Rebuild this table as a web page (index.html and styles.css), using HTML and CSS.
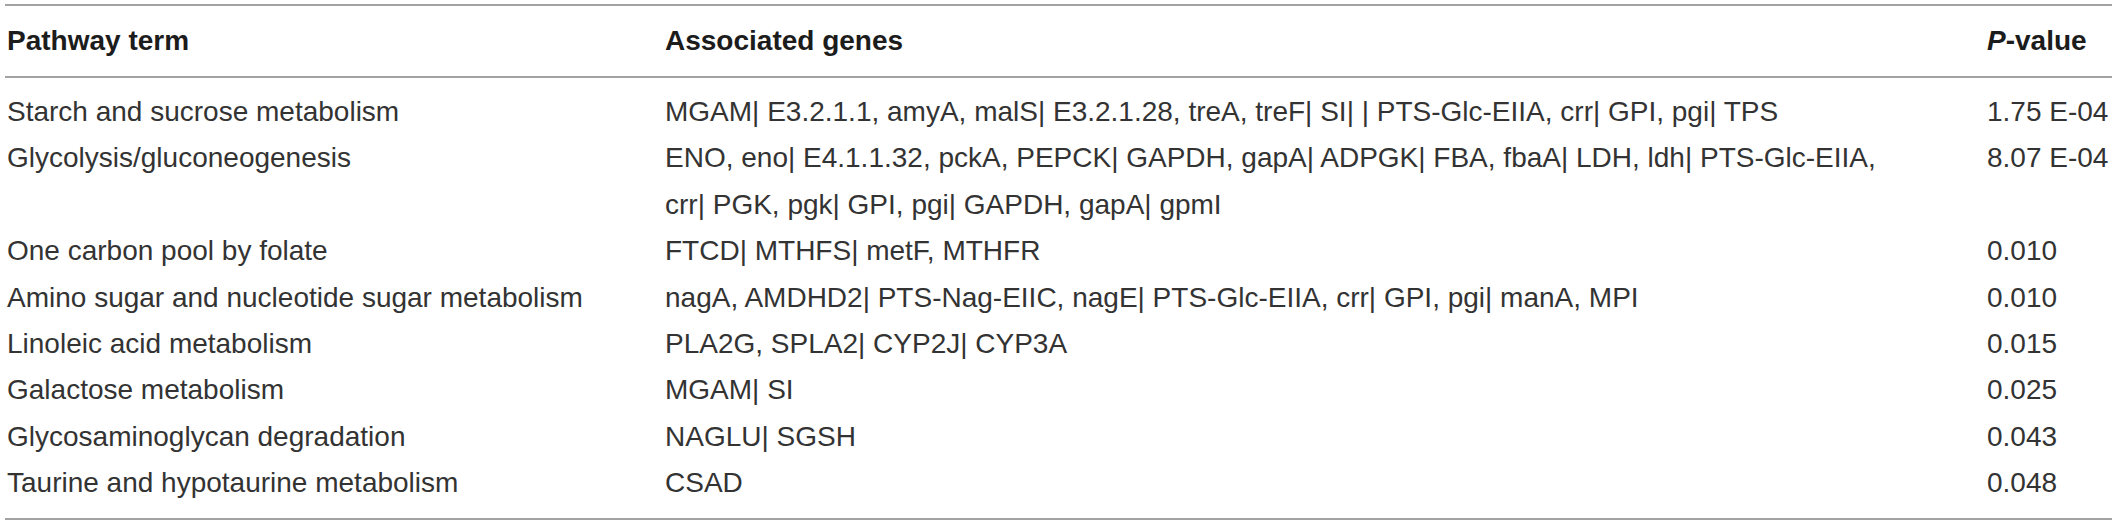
FILE: index.html
```html
<!DOCTYPE html>
<html lang="en">
<head>
<meta charset="utf-8">
<title>Pathway enrichment</title>
<link rel="stylesheet" href="styles.css">
</head>
<body>
<table class="pathways">
  <colgroup>
    <col class="col-term">
    <col class="col-genes">
    <col class="col-p">
  </colgroup>
  <thead>
    <tr>
      <th>Pathway term</th>
      <th>Associated genes</th>
      <th><i>P</i>-value</th>
    </tr>
  </thead>
  <tbody>
    <tr>
      <td>Starch and sucrose metabolism</td>
      <td>MGAM| E3.2.1.1, amyA, malS| E3.2.1.28, treA, treF| SI| | PTS-Glc-EIIA, crr| GPI, pgi| TPS</td>
      <td>1.75 E-04</td>
    </tr>
    <tr>
      <td>Glycolysis/gluconeogenesis</td>
      <td>ENO, eno| E4.1.1.32, pckA, PEPCK| GAPDH, gapA| ADPGK| FBA, fbaA| LDH, ldh| PTS-Glc-EIIA,<br>crr| PGK, pgk| GPI, pgi| GAPDH, gapA| gpmI</td>
      <td>8.07 E-04</td>
    </tr>
    <tr>
      <td>One carbon pool by folate</td>
      <td>FTCD| MTHFS| metF, MTHFR</td>
      <td>0.010</td>
    </tr>
    <tr>
      <td>Amino sugar and nucleotide sugar metabolism</td>
      <td>nagA, AMDHD2| PTS-Nag-EIIC, nagE| PTS-Glc-EIIA, crr| GPI, pgi| manA, MPI</td>
      <td>0.010</td>
    </tr>
    <tr>
      <td>Linoleic acid metabolism</td>
      <td>PLA2G, SPLA2| CYP2J| CYP3A</td>
      <td>0.015</td>
    </tr>
    <tr>
      <td>Galactose metabolism</td>
      <td>MGAM| SI</td>
      <td>0.025</td>
    </tr>
    <tr>
      <td>Glycosaminoglycan degradation</td>
      <td>NAGLU| SGSH</td>
      <td>0.043</td>
    </tr>
    <tr>
      <td>Taurine and hypotaurine metabolism</td>
      <td>CSAD</td>
      <td>0.048</td>
    </tr>
  </tbody>
</table>
</body>
</html>
```

FILE: styles.css
```css
html, body {
  margin: 0;
  padding: 0;
  background: #ffffff;
}

body {
  padding: 4px 6px 0 5px;
  font-family: "Liberation Sans", Arial, Helvetica, sans-serif;
  font-size: 28px;
  color: #333333;
}

.pathways {
  width: 2107px;
  border-collapse: collapse;
  table-layout: fixed;
}

.col-term { width: 658px; }
.col-genes { width: 1322px; }
.col-p { width: 127px; }

.pathways th,
.pathways td {
  text-align: left;
  vertical-align: top;
  padding: 0 0 0 2px;
}

.pathways thead th {
  font-weight: bold;
  color: #1c1c1c;
  line-height: 32px;
  padding-top: 19px;
  padding-bottom: 19px;
  border-top: 2px solid #a3a3a3;
  border-bottom: 2px solid #a3a3a3;
}

.pathways tbody td {
  line-height: 46.4px;
}

.pathways tbody tr:first-child td {
  padding-top: 11px;
}

.pathways tbody tr:last-child td {
  padding-bottom: 11px;
  border-bottom: 2px solid #a3a3a3;
}
```
